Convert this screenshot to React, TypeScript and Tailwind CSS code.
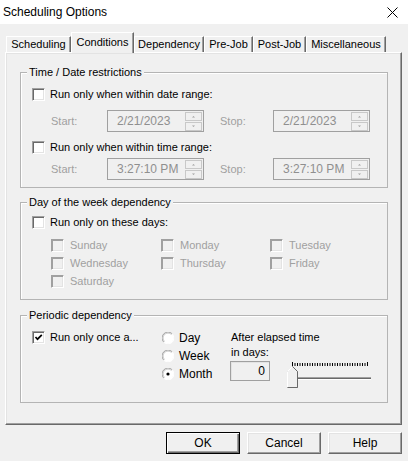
import React from "react";

const Check = ({ checked = false, disabled = false }: { checked?: boolean; disabled?: boolean }) => (
  <div
    className={`w-[13px] h-[13px] shrink-0 border border-t-[#a0a0a0] border-l-[#a0a0a0] border-b-white border-r-white ${
      disabled
        ? "bg-[#f0f0f0] shadow-[inset_1px_1px_0_#a0a0a0,inset_-1px_-1px_0_#e3e3e3]"
        : "bg-white shadow-[inset_1px_1px_0_#696969,inset_-1px_-1px_0_#e3e3e3]"
    }`}
  >
    {checked && (
      <svg width="11" height="11" viewBox="0 0 11 11">
        <path d="M2.5 5 L4.5 7.2 L8.8 2.8" fill="none" stroke="#000" strokeWidth="1.7" />
      </svg>
    )}
  </div>
);

const Radio = ({ on = false }: { on?: boolean }) => (
  <svg width="12" height="12" viewBox="0 0 12 12" className="shrink-0">
    <circle cx="6" cy="6" r="5.5" fill="#fff" />
    <path d="M1.8 10.2 A5.5 5.5 0 0 1 10.2 1.8" fill="none" stroke="#a0a0a0" strokeWidth="1" />
    <path d="M10.2 1.8 A5.5 5.5 0 0 1 1.8 10.2" fill="none" stroke="#ffffff" strokeWidth="1" />
    <path d="M2.5 9.5 A4.6 4.6 0 0 1 9.5 2.5" fill="none" stroke="#c8c8c8" strokeWidth="1" />
    {on && <circle cx="6" cy="6" r="1.6" fill="#000" />}
  </svg>
);

const Spinner = () => (
  <svg width="17" height="19" viewBox="0 0 17 19" className="shrink-0">
    <rect x="0.5" y="0.5" width="16" height="8" fill="#f0f0f0" stroke="#c8c8c8" />
    <rect x="0.5" y="10.5" width="16" height="8" fill="#f0f0f0" stroke="#c8c8c8" />
    <path d="M7 5.5 L8.5 4 L10 5.5 Z" fill="#a0a0a0" />
    <path d="M7 13.5 L8.5 15 L10 13.5 Z" fill="#a0a0a0" />
  </svg>
);

const SpinBox = ({ value }: { value: string }) => (
  <div className="w-[97px] h-[22px] flex items-center justify-between border border-[#a0a0a0] bg-[#f0f0f0] pl-[9px] pr-[1px]">
    <span className="text-[#8f8f8f] text-[12px] leading-[14px]">{value}</span>
    <Spinner />
  </div>
);

const Group = ({ title, h, mt, children }: { title: string; h: string; mt: string; children: React.ReactNode }) => (
  <div className={`${h} ${mt} ml-[14px] w-[368px] border border-[#b4b4b4] shadow-[inset_1px_1px_0_#ffffff]`}>
    <div className="-mt-[7px] ml-[6px] px-[2px] w-fit bg-[#f0f0f0] leading-[13px]">{title}</div>
    {children}
  </div>
);

const Tab = ({ label, w, selected = false }: { label: string; w: string; selected?: boolean }) =>
  selected ? (
    <div
      className={`${w} h-[21px] -mb-px relative z-10 bg-[#f0f0f0] border-t border-l border-t-white border-l-white border-r border-r-[#696969] shadow-[inset_-1px_0_0_#a0a0a0] flex justify-center pt-[3px] leading-[13px]`}
    >
      {label}
    </div>
  ) : (
    <div
      className={`${w} h-[16px] bg-[#f0f0f0] border-t border-l border-t-white border-l-white border-r border-r-[#696969] shadow-[inset_-1px_0_0_#a0a0a0] flex items-center justify-center leading-[13px]`}
    >
      {label}
    </div>
  );

const Btn = ({ label, def = false }: { label: string; def?: boolean }) => (
  <div
    className={`w-[74px] h-[22px] flex items-center justify-center bg-[#f0f0f0] ${
      def
        ? "border border-black shadow-[inset_1px_1px_0_#ffffff,inset_-1px_-1px_0_#696969,inset_-2px_-2px_0_#a0a0a0]"
        : "border border-t-white border-l-white border-b-[#696969] border-r-[#696969] shadow-[inset_-1px_-1px_0_#a0a0a0,inset_1px_1px_0_#e3e3e3]"
    }`}
  >
    {label}
  </div>
);

const Slider = () => {
  const ticks = [];
  for (let i = 0; i <= 30; i++) {
    const x = 6.5 + i * 2.5;
    ticks.push(<line key={i} x1={x} y1={i === 0 || i === 30 ? 1 : 2} x2={x} y2={5} stroke="#000" strokeWidth="1" />);
  }
  return (
    <svg width="88" height="28" viewBox="0 0 88 28" className="shrink-0">
      {ticks}
      <line x1="6" y1="16.5" x2="85" y2="16.5" stroke="#a0a0a0" strokeWidth="1" />
      <line x1="6" y1="17.5" x2="85" y2="17.5" stroke="#696969" strokeWidth="1" />
      <line x1="6" y1="18.5" x2="85" y2="18.5" stroke="#ffffff" strokeWidth="1" />
      <path d="M1.5 26.5 L1.5 10.5 L6.5 5.5 L11.5 10.5 L11.5 26.5 Z" fill="#f0f0f0" stroke="#a0a0a0" />
      <path d="M1.5 26.5 L1.5 10.5 L6.5 5.5" fill="none" stroke="#ffffff" />
      <path d="M6.5 5.5 L11.5 10.5 L11.5 26.5 L1.5 26.5" fill="none" stroke="#696969" />
    </svg>
  );
};

export default function App() {
  const gray = "text-[#a0a0a0]";
  return (
    <div className="w-[408px] h-[461px] bg-[#f0f0f0] text-black font-['Liberation_Sans',Arial,sans-serif] text-[11px] overflow-hidden">
      {/* Title bar */}
      <div className="h-[24px] bg-white flex items-center justify-between pl-[3px] pr-[10px]">
        <span className="text-[12px] leading-[14px]">Scheduling Options</span>
        <svg width="11" height="11" viewBox="0 0 11 11">
          <path d="M0.5 0.5 L10.5 10.5 M10.5 0.5 L0.5 10.5" stroke="#000" strokeWidth="1" />
        </svg>
      </div>

      <div className="px-[5px]">
        {/* Tabs */}
        <div className="mt-[8px] h-[20px] flex items-end pl-[1px]">
          <Tab label="Scheduling" w="w-[65px]" />
          <Tab label="Conditions" w="w-[63px]" selected />
          <Tab label="Dependency" w="w-[70px]" />
          <Tab label="Pre-Job" w="w-[49px]" />
          <Tab label="Post-Job" w="w-[53px]" />
          <Tab label="Miscellaneous" w="w-[80px]" />
        </div>

        {/* Panel */}
        <div className="h-[373px] w-[397px] border border-t-white border-l-white border-r-[#696969] border-b-[#696969] shadow-[inset_-1px_-1px_0_#a0a0a0,inset_1px_1px_0_#e3e3e3] flex flex-col">
          {/* Group 1 */}
          <Group title="Time / Date restrictions" h="h-[116px]" mt="mt-[19px]">
            <div className="mt-[9px] pl-[11px] flex items-center gap-[5px] h-[13px]">
              <Check />
              <span className="leading-[13px]">Run only when within date range:</span>
            </div>
            <div className="mt-[9px] flex items-center h-[22px] pl-[30px]">
              <span className={`${gray} w-[56px]`}>Start:</span>
              <SpinBox value="2/21/2023" />
              <span className={`${gray} ml-[16px] w-[53px]`}>Stop:</span>
              <SpinBox value="2/21/2023" />
            </div>
            <div className="mt-[9px] pl-[11px] flex items-center gap-[5px] h-[13px]">
              <Check />
              <span className="leading-[13px]">Run only when within time range:</span>
            </div>
            <div className="mt-[4px] flex items-center h-[22px] pl-[30px]">
              <span className={`${gray} w-[56px]`}>Start:</span>
              <SpinBox value="3:27:10 PM" />
              <span className={`${gray} ml-[16px] w-[53px]`}>Stop:</span>
              <SpinBox value="3:27:10 PM" />
            </div>
          </Group>

          {/* Group 2 */}
          <Group title="Day of the week dependency" h="h-[98px]" mt="mt-[14px]">
            <div className="mt-[7px] pl-[11px] flex items-center gap-[5px] h-[13px]">
              <Check />
              <span className="leading-[13px]">Run only on these days:</span>
            </div>
            <div className="mt-[10px] pl-[30px] grid grid-cols-[110px_109px_100px] gap-y-[5px]">
              {["Sunday", "Monday", "Tuesday", "Wednesday", "Thursday", "Friday", "Saturday"].map((d) => (
                <div key={d} className="flex items-center gap-[6px] h-[13px]">
                  <Check disabled />
                  <span className={`${gray} leading-[13px]`}>{d}</span>
                </div>
              ))}
            </div>
          </Group>

          {/* Group 3 */}
          <Group title="Periodic dependency" h="h-[88px]" mt="mt-[15px]">
            <div className="flex">
              <div className="w-[141px] pl-[11px] pt-[9px] flex items-start gap-[5px]">
                <Check checked />
                <span className="leading-[13px]">Run only once a...</span>
              </div>
              <div className="w-[68px] pt-[10px] flex flex-col gap-[6px]">
                {[
                  ["Day", false],
                  ["Week", false],
                  ["Month", true],
                ].map(([l, on]) => (
                  <div key={l as string} className="flex items-center gap-[5px] h-[12px]">
                    <Radio on={on as boolean} />
                    <span className="leading-[13px] text-[12px]">{l as string}</span>
                  </div>
                ))}
              </div>
              <div className="w-[56px] pt-[8px]">
                <div className="leading-[15px] pl-[1px] whitespace-nowrap">After elapsed time</div>
                <div className="leading-[15px] pl-[1px]">in days:</div>
                <div className="mt-[1px] w-[40px] h-[20px] border border-[#a0a0a0] shadow-[inset_1px_1px_0_#e3e3e3] flex items-center justify-end pr-[4px] text-[12px]">
                  0
                </div>
              </div>
              <div className="pt-[39px]">
                <Slider />
              </div>
            </div>
          </Group>
        </div>

        {/* Buttons */}
        <div className="mt-[7px] flex justify-end gap-[7px] pr-[1px] text-[12px]">
          <Btn label="OK" def />
          <Btn label="Cancel" />
          <Btn label="Help" />
        </div>
      </div>
    </div>
  );
}
